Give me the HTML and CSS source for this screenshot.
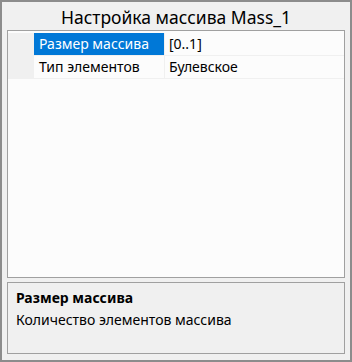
FILE: index.html
```html
<!DOCTYPE html>
<html>
<head>
    <meta charset="utf-8" />
    <title>Настройка массива Mass_1</title>
    <link rel="stylesheet" href="styles.css">
</head>
<body>
    <div class="window">
        <div class="title">Настройка массива Mass_1</div>
        <div class="grid">
            <div class="row selected">
                <div class="gutter"></div>
                <div class="name">Размер массива</div>
                <div class="value">[0..1]</div>
            </div>
            <div class="row">
                <div class="gutter"></div>
                <div class="name">Тип элементов</div>
                <div class="value">Булевское</div>
            </div>
        </div>
        <div class="help">
            <div class="help-title">Размер массива</div>
            <div class="help-text">Количество элементов массива</div>
        </div>
    </div>
</body>
</html>
```
FILE: styles.css
```css
* {margin: 0; padding: 0; box-sizing: border-box;}
body {
    font-family: "Noto Sans", "Open Sans", sans-serif;
    background: #f0f0f0;
}

.window {
    width: 352px;
    height: 362px;
    display: flex;
    flex-direction: column;
    border: 2px solid #8c8c8c;
    background: #f0f0f0;
    padding: 0 5px 6px 5px;
}

.title {
    height: 28px;
    text-align: center;
    font-size: 17.5px;
    line-height: 30px;
    color: #000;
}

.grid {
    height: 248px;
    border: 1px solid #a0a0a0;
    background: #fcfcfc;
    padding-top: 2px;
}

.row {
    display: flex;
    height: 23px;
    border-bottom: 1px solid #f0f0f0;
    font-size: 14px;
    line-height: 21px;
    color: #000;
}
.gutter {
    width: 26px;
    background: #f0f0f0;
}
.name {
    width: 131px;
    padding-left: 5px;
    border-right: 1px solid #f0f0f0;
}
.value {
    flex: 1;
    padding-left: 4px;
}
.selected .name {
    background: #0078d7;
    color: #fff;
}

.help {
    margin-top: 4px;
    flex: 1;
    border: 1px solid #a0a0a0;
    background: #f0f0f0;
    padding: 4px 8px;
    font-size: 14px;
    line-height: 22px;
    color: #000;
}
.help-title {font-weight: bold;}
```
